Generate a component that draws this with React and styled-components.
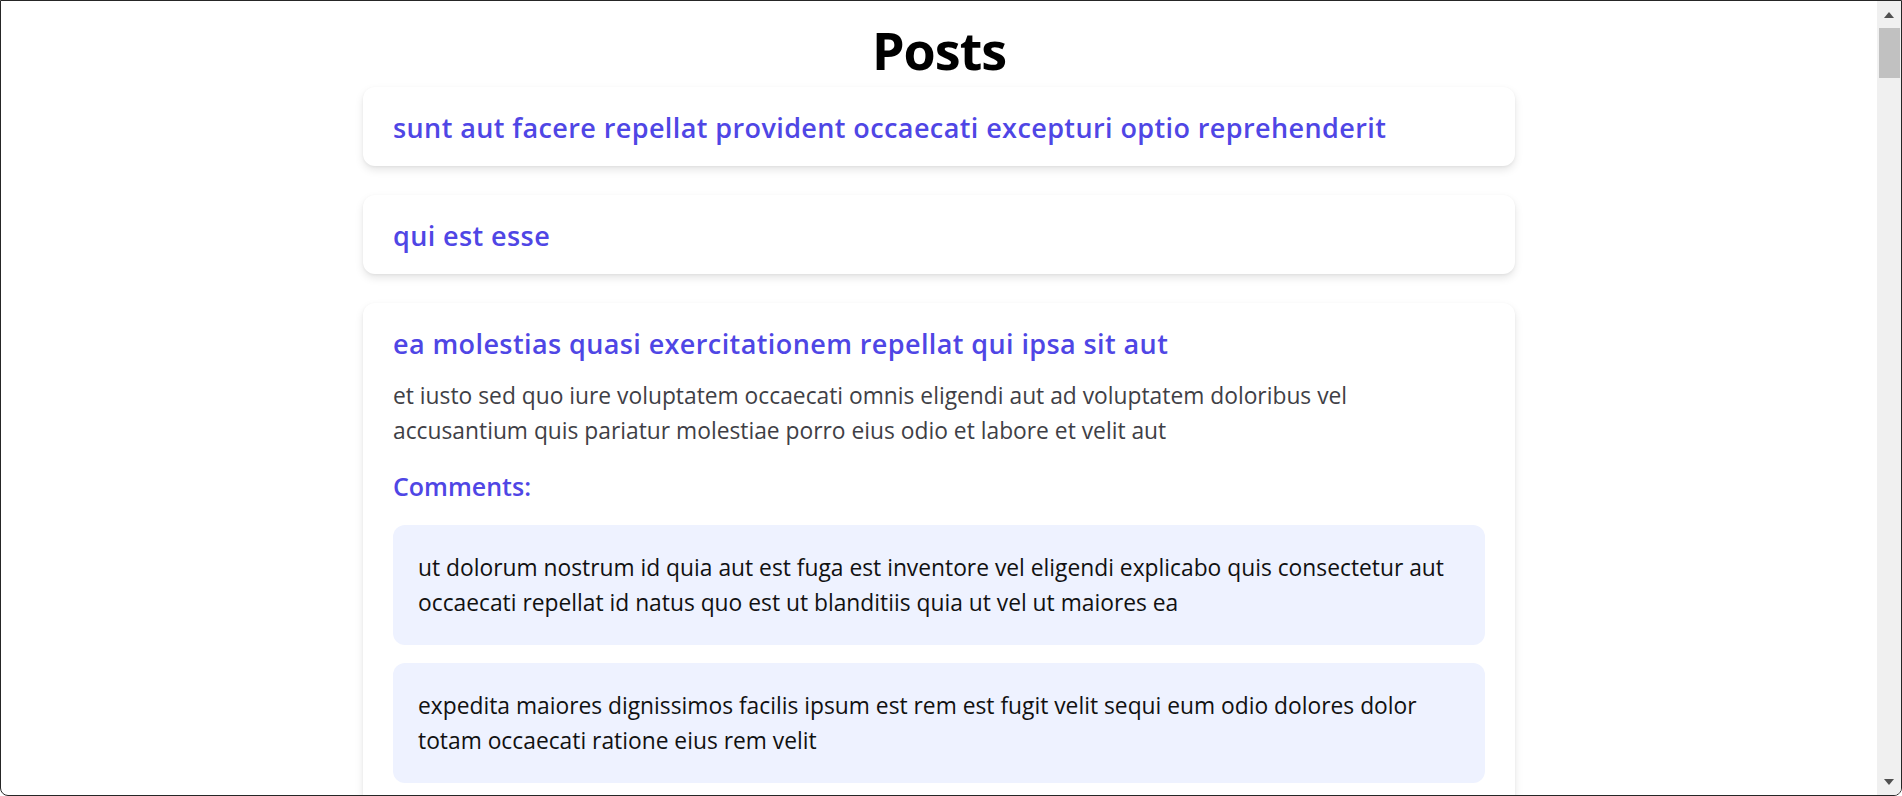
import styled, { createGlobalStyle } from "styled-components";

const GlobalStyle = createGlobalStyle`
  html, body {
    margin: 0;
    height: 100%;
    overflow: hidden;
    background: #ffffff;
    font-family: "Open Sans", "Noto Sans", sans-serif;
  }
  * {
    box-sizing: border-box;
  }
`;

const posts = [
  {
    id: 1,
    title:
      "sunt aut facere repellat provident occaecati excepturi optio reprehenderit",
  },
  { id: 2, title: "qui est esse" },
  {
    id: 3,
    title: "ea molestias quasi exercitationem repellat qui ipsa sit aut",
    body: "et iusto sed quo iure voluptatem occaecati omnis eligendi aut ad voluptatem doloribus vel accusantium quis pariatur molestiae porro eius odio et labore et velit aut",
    comments: [
      "ut dolorum nostrum id quia aut est fuga est inventore vel eligendi explicabo quis consectetur aut occaecati repellat id natus quo est ut blanditiis quia ut vel ut maiores ea",
      "expedita maiores dignissimos facilis ipsum est rem est fugit velit sequi eum odio dolores dolor totam occaecati ratione eius rem velit",
    ],
  },
];

const Window = styled.div`
  height: 100vh;
  display: flex;
  border: 1px solid #262626;
  border-radius: 0 0 8px 8px;
  overflow: hidden;
  background: #ffffff;
`;

const Viewport = styled.main`
  flex: 1;
  overflow: hidden;
`;

const Page = styled.div`
  width: 1152px;
  margin: 0 auto;
`;

const Heading = styled.h1`
  margin: 23px 0 11px;
  font-size: 52px;
  line-height: 52px;
  font-weight: 700;
  letter-spacing: -1px;
  text-align: center;
  color: #000000;
`;

const PostList = styled.div`
  display: flex;
  flex-direction: column;
  gap: 29px;
`;

const Card = styled.article`
  background: #ffffff;
  border-radius: 12px;
  padding: 25px 30px 23px;
  box-shadow: 0 4px 8px rgba(0, 0, 0, 0.1), 0 1px 3px rgba(0, 0, 0, 0.05);
`;

const PostTitle = styled.h2`
  margin: 0;
  font-size: 27px;
  line-height: 31px;
  font-weight: 600;
  letter-spacing: 0.4px;
  color: #4f46e5;
`;

const PostBody = styled.p`
  margin: 19px 0 0;
  font-size: 22.8px;
  line-height: 35px;
  color: #3f3f46;
`;

const CommentsLabel = styled.h3`
  margin: 23px 0 23px;
  font-size: 25px;
  line-height: 31px;
  font-weight: 600;
  color: #4f46e5;
`;

const CommentList = styled.div`
  display: flex;
  flex-direction: column;
  gap: 18px;
`;

const Comment = styled.div`
  background: #eef2ff;
  border-radius: 12px;
  padding: 25px;
  font-size: 22.8px;
  line-height: 35px;
  color: #111111;
`;

const ScrollTrack = styled.div`
  width: 24px;
  flex-shrink: 0;
  display: flex;
  flex-direction: column;
  background: #f0f0f0;
`;

const ScrollButton = styled.div`
  height: 27px;
  display: flex;
  align-items: center;
  justify-content: center;
`;

const ScrollThumb = styled.div`
  height: 50px;
  margin: 0 1px 0 2px;
  background: #c1c1c1;
`;

const ScrollSpace = styled.div`
  flex: 1;
`;

function Arrow({ down }) {
  return (
    <svg width="10" height="6" viewBox="0 0 10 6">
      <path d={down ? "M0 0h10L5 6z" : "M5 0l5 6H0z"} fill="#505050" />
    </svg>
  );
}

function Post({ post }) {
  return (
    <Card>
      <PostTitle>{post.title}</PostTitle>
      {post.body && <PostBody>{post.body}</PostBody>}
      {post.comments && (
        <>
          <CommentsLabel>Comments:</CommentsLabel>
          <CommentList>
            {post.comments.map((c, i) => (
              <Comment key={i}>{c}</Comment>
            ))}
          </CommentList>
        </>
      )}
    </Card>
  );
}

export default function App() {
  return (
    <>
      <GlobalStyle />
      <Window>
        <Viewport>
          <Page>
            <Heading>Posts</Heading>
            <PostList>
              {posts.map((p) => (
                <Post key={p.id} post={p} />
              ))}
            </PostList>
          </Page>
        </Viewport>
        <ScrollTrack>
          <ScrollButton>
            <Arrow />
          </ScrollButton>
          <ScrollThumb />
          <ScrollSpace />
          <ScrollButton>
            <Arrow down />
          </ScrollButton>
        </ScrollTrack>
      </Window>
    </>
  );
}
